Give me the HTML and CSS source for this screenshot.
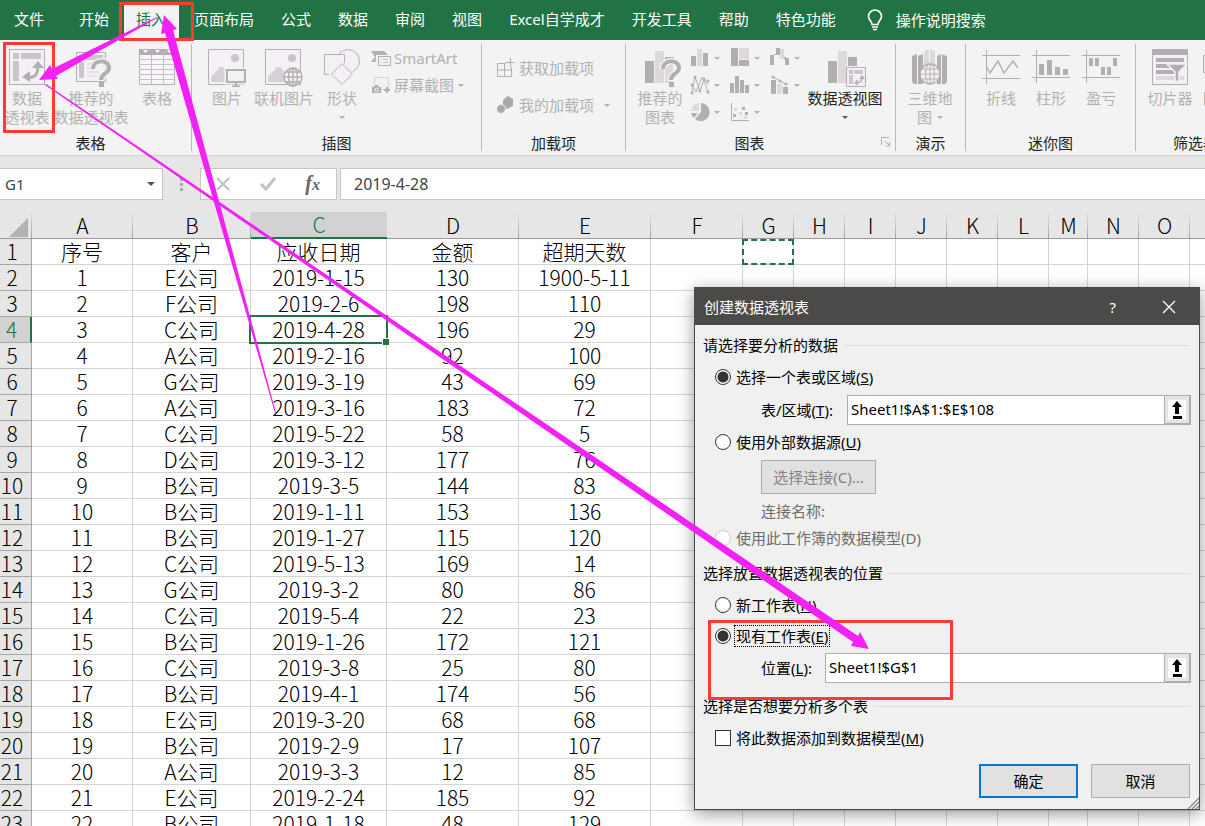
FILE: index.html
```html
<!DOCTYPE html>
<html lang="zh-CN">
<head>
<meta charset="utf-8">
<title>创建数据透视表</title>
<link rel="stylesheet" href="styles.css">
</head>
<body>
<div class="app">
  <nav class="menu">
    <button class="tab tab-file">文件</button>
    <button class="tab">开始</button>
    <button class="tab tab-active">插入</button>
    <button class="tab">页面布局</button>
    <button class="tab">公式</button>
    <button class="tab">数据</button>
    <button class="tab">审阅</button>
    <button class="tab">视图</button>
    <button class="tab">Excel自学成才</button>
    <button class="tab">开发工具</button>
    <button class="tab">帮助</button>
    <button class="tab">特色功能</button>
    <button class="tell">
      <svg width="16" height="22" viewBox="0 0 16 22" fill="none" stroke="#fff" stroke-width="1.6"><path d="M5 15.500C5 12 1.500 11 1.500 7.500a6.500 6.500 0 0 1 13 0C14.500 11 11 12 11 15.500zM5 18h6M6 20.500h4"/></svg>
      <span>操作说明搜索</span>
    </button>
  </nav>

  <div class="ribbon">
    <section class="group g-tables">
      <div class="tools">
        <button class="big w-54">
          <svg width="36" height="36" viewBox="0 0 36 36"><rect x=".5" y=".5" width="35" height="35" fill="#f5f0f6" stroke="#b1afb1"/><path fill="#c9c6c9" d="M4 4h6v6H4zM12 4h20v6H12zM4 12h6v20H4z"/><path d="M17 28c8 2 12-2 12-11" fill="none" stroke="#b1afb1" stroke-width="3"/><path fill="#b1afb1" d="M13 28l8-6v11zM23 19l6-7 6 7z"/></svg>
          <span>数据</span><span>透视表</span>
        </button>
        <button class="big w-74">
          <svg width="40" height="38" viewBox="-4 0 40 38"><path d="M1.500 3.500h29v29h-29z" fill="#f5f0f6" stroke="#b1afb1"/><path fill="#c9c6c9" d="M4 6h5v5H4zM11 6h17v5H11zM4 13h5v16H4z"/><path d="M12 15h8M12 19h8M12 23h12M12 27h10" stroke="#d5d0d6"/><path d="M18 20c0-10 16-10 16-1 0 6-8 5-8 13" fill="none" stroke="#f3f3f3" stroke-width="7"/><path d="M18 20c0-10 16-10 16-1 0 6-8 5-8 12" fill="none" stroke="#b1afb1" stroke-width="4"/><path fill="#b1afb1" d="M24 33h5v5h-5z"/></svg>
          <span>推荐的</span><span>数据透视表</span>
        </button>
        <button class="big w-58">
          <svg width="36" height="36" viewBox="0 0 36 36"><path d="M.5.5h35v35H.5z" fill="#f8f4f9" stroke="#b1afb1"/><path fill="#b1afb1" d="M0 0h36v6H0z"/><path fill="#fff" d="M4 1h5L6.500 4zM16 1h5l-2.500 3zM28 1h5l-2.500 3z"/><path d="M12.500 6v30M24.500 6v30M0 10.500h36M0 15.500h36M0 20.500h36M0 25.500h36M0 30.500h36" stroke="#c4c1c4"/></svg>
          <span>表格</span>
        </button>
      </div>
      <h2>表格</h2>
    </section>

    <section class="group g-art">
      <div class="tools">
        <button class="big w-56">
          <svg width="38" height="38" viewBox="0 0 38 38"><path d="M.5.5h35v35H.5z" fill="#f5f0f6" stroke="#b1afb1"/><circle cx="27" cy="9" r="4" fill="#c9c6c9"/><path fill="#d5d0d6" d="M3 33V28l9-10h3l7 8v7z"/><path d="M18.500 20.500h19v13h-19z" fill="#f5f0f6" stroke="#f3f3f3" stroke-width="4"/><path d="M19 21h18v12H19z" fill="#f5f0f6" stroke="#b1afb1" stroke-width="2"/><path d="M28 33v4M24 37.500h8" stroke="#b1afb1" stroke-width="2"/></svg>
          <span>图片</span>
        </button>
        <button class="big w-58">
          <svg width="38" height="38" viewBox="0 0 38 38"><path d="M.5.5h35v35H.5z" fill="#f5f0f6" stroke="#b1afb1"/><circle cx="27" cy="9" r="4" fill="#c9c6c9"/><path fill="#d5d0d6" d="M3 33V28l9-10h3l7 8v7z"/><circle cx="28" cy="28" r="9" fill="#f5f0f6" stroke="#b1afb1" stroke-width="1.400"/><ellipse cx="28" cy="28" rx="4.500" ry="9" fill="none" stroke="#b1afb1" stroke-width="1.400"/><path d="M19 28h18M28 19v18M21 23h14M21 33h14" stroke="#b1afb1" stroke-width="1.400"/></svg>
          <span>联机图片</span>
        </button>
        <button class="big w-58">
          <svg width="38" height="38" viewBox="0 0 38 38" fill="#f5f0f6" stroke="#b1afb1"><circle cx="25" cy="12" r="11.500"/><path d="M1.500 5.500h20v20h-20z"/><path d="M19 14.500L29.500 25 19 35.500 8.500 25z" stroke="#f3f3f3" stroke-width="4"/><path d="M19 14.500L29.500 25 19 35.500 8.500 25z"/></svg>
          <span>形状</span><span class="line"><i class="arrow"></i></span>
        </button>
        <div class="stack">
          <button class="small">
            <svg width="20" height="16" viewBox="0 0 20 16"><path fill="#b1afb1" d="M0 1h13l5 5H8l-4 4 3 2H0l4-5z"/><path d="M6.500 6.500h13v9h-13z" fill="#f5f0f6" stroke="#f3f3f3" stroke-width="3"/><path d="M7.500 6.500h12v9h-12z" fill="#f5f0f6" stroke="#b1afb1"/><path d="M10 9.500h1M12 9.500h5M10 12.500h1M12 12.500h5" stroke="#c4c1c4"/></svg>
            <span>SmartArt</span>
          </button>
          <button class="small">
            <svg width="20" height="18" viewBox="0 0 20 18"><path d="M3.500 1.500h14v12h-14z" fill="#f5f0f6" stroke="#b8b5b8" stroke-dasharray="1 1"/><path d="M0 9h10v9H0zM14 12h2v6h-2zM12 14h6v2h-6z" fill="#f3f3f3"/><path d="M1 11h2l1-2h3l1 2h2v6H1zM13 13h6v2h-6zM15 11h2v6h-2z" fill="#b1afb1"/><circle cx="5.500" cy="13.800" r="1.700" fill="none" stroke="#fff"/></svg>
            <span>屏幕截图</span><i class="arrow"></i>
          </button>
        </div>
      </div>
      <h2>插图</h2>
    </section>

    <section class="group g-addins">
      <div class="tools stack-wide">
        <button class="small">
          <svg width="20" height="20" viewBox="0 0 20 20" fill="none" stroke="#b1afb1"><path d="M1.500 5.500h14v13h-14zM8.500 5v14M1 12h15"/><path d="M10 4.500h9M14.500 0v9" stroke="#f3f3f3" stroke-width="3"/><path d="M10 4.500h9M14.500 0v9"/></svg>
          <span>获取加载项</span>
        </button>
        <button class="small">
          <svg width="20" height="20" viewBox="0 0 20 20" fill="#aaa8aa"><path d="M12 1l5 3v7l-6 3-4-2V5z"/><circle cx="5" cy="14" r="4.500" stroke="#f3f3f3"/></svg>
          <span>我的加载项</span><i class="arrow arrow-far"></i>
        </button>
      </div>
      <h2>加载项</h2>
    </section>

    <section class="group g-charts">
      <div class="tools">
        <button class="big w-60">
          <svg width="42" height="38" viewBox="-6 0 42 38"><path fill="#b1afb1" d="M0 12h9v22H0zM20 8h9v8h-9z"/><path fill="#ddd8dc" d="M10 2h9v32h-9zM20 16h8v18h-8z"/><path d="M18 20c0-10 16-10 16-1 0 6-8 5-8 13" fill="none" stroke="#f3f3f3" stroke-width="7"/><path d="M18 20c0-10 16-10 16-1 0 6-8 5-8 12" fill="none" stroke="#b1afb1" stroke-width="4"/><path fill="#b1afb1" d="M24 33h5v5h-5z"/></svg>
          <span>推荐的</span><span>图表</span>
        </button>
        <div class="charts">
          <button class="mini"><svg width="20" height="20" viewBox="0 0 20 20"><path fill="#b1afb1" d="M1 8h5v10H1zM13 5h5v13h-5z"/><path fill="#ddd8dc" d="M7 1h5v17H7z"/></svg><i class="arrow"></i></button>
          <button class="mini"><svg width="20" height="20" viewBox="0 0 20 20"><path fill="#b1afb1" d="M1 0h7v18H1zM9 12h10v6H9z"/><path fill="#ddd8dc" d="M9 0h10v11H9z"/></svg><i class="arrow"></i></button>
          <button class="mini"><svg width="20" height="20" viewBox="0 0 20 20"><path fill="#b1afb1" d="M0 7h4v10H0zM3 6h3V0h4v7H5zM15 10h4v7h-4zM10 9h6v2h-6z"/><path fill="#ddd8dc" d="M10 1h4v10h-4z"/></svg><i class="arrow"></i></button>
          <button class="mini"><svg width="20" height="20" viewBox="0 0 20 20"><path fill="none" stroke="#b1afb1" d="M2 18L5 2l5 14 4-12 4 14M2 10l4 7 6-15 6 7"/><path stroke="#b1afb1" stroke-linecap="round" stroke-width="3" d="M2 18h0M5 2h0M10 16h0M14 4h0M18 17h0M2 10h0M18 6h0"/></svg><i class="arrow"></i></button>
          <button class="mini"><svg width="20" height="20" viewBox="0 0 20 20"><path fill="#b1afb1" d="M0 8h4v10H0zM5 1h4v17H5zM10 5h4v13h-4zM15 10h4v8h-4z"/></svg><i class="arrow"></i></button>
          <button class="mini"><svg width="20" height="20" viewBox="0 0 20 20"><path fill="#b1afb1" d="M1 5h5v14H1zM13 12h5v7h-5z"/><path fill="#ddd8dc" d="M7 9h5v10H7z"/><path stroke="#b1afb1" fill="none" d="M3 2l7 4 6 3"/><path stroke="#b1afb1" stroke-linecap="round" stroke-width="3" d="M3 2h0M10 6h0M16 9h0"/></svg><i class="arrow"></i></button>
          <button class="mini"><svg width="20" height="20" viewBox="0 0 20 20"><path fill="#b1afb1" d="M11 1a9 9 0 1 1-6 16l6-7z"/><path fill="#ddd8dc" d="M9 1v8H1a9 9 0 0 1 8-8z"/><path fill="#b1afb1" d="M1 11h7l-4 5a9 9 0 0 1-3-5z"/></svg><i class="arrow"></i></button>
          <button class="mini"><svg width="20" height="20" viewBox="0 0 20 20"><path stroke="#b1afb1" fill="none" d="M1.500 1v17.500H19"/><path fill="#b1afb1" d="M12 5h3v3h-3zM3 12h3v3H3zM15 10h3v3h-3z"/><path fill="#ddd8dc" d="M4 6h3v3H4zM9 10h3v3H9zM14 14h3v3h-3z"/></svg><i class="arrow"></i></button>
        </div>
        <button class="big w-74 enabled">
          <svg width="44" height="38" viewBox="-4 0 44 38"><path fill="#b1afb1" d="M1 12h9v22H1zM21 8h9v9h-9z"/><path fill="#ddd8dc" d="M11 2h9v32h-9z"/><path d="M19.500 18.500h19v19h-19z" fill="#f5f0f6" stroke="#b1afb1"/><path fill="#c9c6c9" d="M22 21h4v4h-4zM27 21h9v4h-9zM22 26h4v9h-4z"/><path d="M29 34c4 0 6-2 6-5M31 31l-3 3 3 2M33 30l2-3 2 3" fill="none" stroke="#b1afb1" stroke-width="1.400"/></svg>
          <span>数据透视图</span><span class="line"><i class="arrow"></i></span>
        </button>
      </div>
      <div class="caption"><h2>图表</h2>
        <button class="launcher" aria-label="图表选项"><svg width="10" height="10" viewBox="0 0 10 10" fill="none" stroke="#b1afb1"><path d="M.5 8V.5H8M4 4l4 4M8.500 5v4H5"/></svg></button>
      </div>
    </section>

    <section class="group g-demo">
      <div class="tools">
        <button class="big w-60">
          <svg width="36" height="36" viewBox="0 0 36 36"><path fill="#b1afb1" d="M0 7l5-2v30H2l-2-2zM6 7l5-2v30H6zM25 7l4-2 6 2v26l-2 2h-8z"/><path fill="#ddd8dc" d="M12 2l5-2 6 2v30H12z"/><path stroke="#f3f3f3" d="M5.500 4v31M17.500 0v16M29.500 4v31"/><circle cx="18" cy="25" r="10" fill="#f5f0f6" stroke="#b1afb1" stroke-width="1.400"/><ellipse cx="18" cy="25" rx="4.500" ry="10" fill="none" stroke="#b1afb1"/><path d="M8 25h20M18 15v20M10 20h16M10 30h16" stroke="#b1afb1"/></svg>
          <span>三维地</span><span class="line">图<i class="arrow"></i></span>
        </button>
      </div>
      <h2>演示</h2>
    </section>

    <section class="group g-spark">
      <div class="tools">
        <button class="big w-50">
          <svg width="38" height="36" viewBox="0 0 38 36" fill="none" stroke="#b1afb1"><path d="M0 6.500h38M0 29.500h38M4.500 1v34"/><path d="M5 18l3 6 8-12 6 12 9-12 5 7" stroke-width="1.400"/></svg>
          <span>折线</span>
        </button>
        <button class="big w-50">
          <svg width="38" height="36" viewBox="0 0 38 36"><path d="M0 6.500h38M0 28.500h38M4.500 1v33" stroke="#b1afb1"/><path fill="#b1afb1" d="M7 15h5v11H7zM15 11h5v15h-5zM23 18h5v8h-5zM31 20h5v6h-5z"/></svg>
          <span>柱形</span>
        </button>
        <button class="big w-50">
          <svg width="38" height="36" viewBox="0 0 38 36"><path d="M0 6.500h38M0 28.500h38M4.500 1v33" stroke="#b1afb1"/><path fill="#b1afb1" d="M7 9h4v8H7zM13 9h4v8h-4zM31 9h4v8h-4zM19 18h4v8h-4zM25 18h4v8h-4z"/></svg>
          <span>盈亏</span>
        </button>
      </div>
      <h2>迷你图</h2>
    </section>

    <section class="group g-filter">
      <div class="tools">
        <button class="big w-58">
          <svg width="36" height="36" viewBox="0 0 36 36"><path d="M.5.5h35v35H.5z" fill="#f5f0f6" stroke="#b1afb1"/><path fill="#b1afb1" d="M0 0h36v6H0zM4 9h28v4H4zM4 15h14v4H4zM4 21h18v4H4z"/><path fill="#ddd8dc" d="M4 27h28v4H4z"/><path d="M15 15h20l-8 8v9l-4 1V23z" fill="#b1afb1" stroke="#f5f0f6" stroke-width="1.500"/></svg>
          <span>切片器</span>
        </button>
        <button class="big w-50">
          <svg width="42" height="36" viewBox="0 0 42 36"><path d="M.5 6.500h40v17H.5z" fill="#f5f0f6" stroke="#b1afb1"/></svg>
          <span>日程表</span>
        </button>
      </div>
      <h2>筛选器</h2>
    </section>
  </div>

  <div class="formula-bar">
    <div class="name-box"><input aria-label="名称框" value="G1"><i class="arrow"></i></div>
    <div class="grip"><i></i><i></i><i></i></div>
    <div class="fx-box">
      <button aria-label="取消输入"><svg width="16" height="16" viewBox="0 0 16 16" fill="none" stroke="#c0c0c0" stroke-width="2"><path d="M2 2l12 12M14 2L2 14"/></svg></button>
      <button aria-label="输入"><svg width="18" height="16" viewBox="0 0 18 16" fill="none" stroke="#c3c3c3" stroke-width="3"><path d="M2 8l5 5L16 2"/></svg></button>
      <button class="fx" aria-label="插入函数">f<span>x</span></button>
    </div>
    <input class="formula" aria-label="编辑栏" value="2019-4-28">
  </div>

  <main class="sheet">
    <table>
      <colgroup><col class="c-head"><col class="c-a"><col class="c-b"><col class="c-c"><col class="c-d"><col class="c-d"><col class="c-f"><col class="c-g"><col class="c-g"><col class="c-g"><col class="c-g"><col class="c-g"><col class="c-g"><col class="c-m"><col class="c-g"><col class="c-g"><col></colgroup>
      <thead><tr><th class="corner"><svg width="19" height="19" viewBox="0 0 19 19"><path fill="#b2b2b2" d="M19 0v19H0z"/></svg><th>A<th>B<th class="on">C<th>D<th>E<th>F<th>G<th>H<th>I<th>J<th>K<th>L<th>M<th>N<th>O<th></tr></thead>
      <tbody>
      <tr><th>1<td>序号<td>客户<td>应收日期<td>金额<td>超期天数<td><td class="marquee"><td><td><td><td><td><td><td><td><td>
      <tr><th>2<td>1<td>E公司<td>2019-1-15<td>130<td>1900-5-11<td><td><td><td><td><td><td><td><td><td><td>
      <tr><th>3<td>2<td>F公司<td>2019-2-6<td>198<td>110<td><td><td><td><td><td><td><td><td><td><td>
      <tr><th class="on">4<td>3<td>C公司<td class="selected">2019-4-28<td>196<td>29<td><td><td><td><td><td><td><td><td><td><td>
      <tr><th>5<td>4<td>A公司<td>2019-2-16<td>92<td>100<td><td><td><td><td><td><td><td><td><td><td>
      <tr><th>6<td>5<td>G公司<td>2019-3-19<td>43<td>69<td><td><td><td><td><td><td><td><td><td><td>
      <tr><th>7<td>6<td>A公司<td>2019-3-16<td>183<td>72<td><td><td><td><td><td><td><td><td><td><td>
      <tr><th>8<td>7<td>C公司<td>2019-5-22<td>58<td>5<td><td><td><td><td><td><td><td><td><td><td>
      <tr><th>9<td>8<td>D公司<td>2019-3-12<td>177<td>76<td><td><td><td><td><td><td><td><td><td><td>
      <tr><th>10<td>9<td>B公司<td>2019-3-5<td>144<td>83<td><td><td><td><td><td><td><td><td><td><td>
      <tr><th>11<td>10<td>B公司<td>2019-1-11<td>153<td>136<td><td><td><td><td><td><td><td><td><td><td>
      <tr><th>12<td>11<td>B公司<td>2019-1-27<td>115<td>120<td><td><td><td><td><td><td><td><td><td><td>
      <tr><th>13<td>12<td>C公司<td>2019-5-13<td>169<td>14<td><td><td><td><td><td><td><td><td><td><td>
      <tr><th>14<td>13<td>G公司<td>2019-3-2<td>80<td>86<td><td><td><td><td><td><td><td><td><td><td>
      <tr><th>15<td>14<td>C公司<td>2019-5-4<td>22<td>23<td><td><td><td><td><td><td><td><td><td><td>
      <tr><th>16<td>15<td>B公司<td>2019-1-26<td>172<td>121<td><td><td><td><td><td><td><td><td><td><td>
      <tr><th>17<td>16<td>C公司<td>2019-3-8<td>25<td>80<td><td><td><td><td><td><td><td><td><td><td>
      <tr><th>18<td>17<td>B公司<td>2019-4-1<td>174<td>56<td><td><td><td><td><td><td><td><td><td><td>
      <tr><th>19<td>18<td>E公司<td>2019-3-20<td>68<td>68<td><td><td><td><td><td><td><td><td><td><td>
      <tr><th>20<td>19<td>B公司<td>2019-2-9<td>17<td>107<td><td><td><td><td><td><td><td><td><td><td>
      <tr><th>21<td>20<td>A公司<td>2019-3-3<td>12<td>85<td><td><td><td><td><td><td><td><td><td><td>
      <tr><th>22<td>21<td>E公司<td>2019-2-24<td>185<td>92<td><td><td><td><td><td><td><td><td><td><td>
      <tr><th>23<td>22<td>B公司<td>2019-1-18<td>48<td>129<td><td><td><td><td><td><td><td><td><td><td>
      </tbody>
    </table>
  </main>
</div>

<form class="dialog" role="dialog" aria-labelledby="dlg-title">
  <header class="titlebar">
    <h1 id="dlg-title">创建数据透视表</h1>
    <button type="button" class="help" aria-label="帮助">?</button>
    <button type="button" class="close" aria-label="关闭"><svg width="14" height="14" viewBox="0 0 14 14" stroke="#fff" stroke-width="1.300"><path d="M1 1l12 12M13 1L1 13"/></svg></button>
  </header>
  <div class="dialog-body">
    <h3>请选择要分析的数据</h3>
    <label class="choice"><input type="radio" name="src" checked><span>选择一个表或区域(<u>S</u>)</span></label>
    <div class="field"><label for="range" class="label-range">表/区域(<u>T</u>):</label>
      <div class="ref-box"><input id="range" value="Sheet1!$A$1:$E$108"><button type="button" aria-label="折叠区域"><svg width="18" height="20" viewBox="0 0 18 20"><path fill="#fff" d="M0 0h18v20H0z"/><path d="M9 1l5 6h-3v7H7V7H4zM5 16h9v3H5z"/></svg></button></div>
    </div>
    <label class="choice"><input type="radio" name="src"><span>使用外部数据源(<u>U</u>)</span></label>
    <button type="button" class="btn connect" disabled>选择连接(C)...</button>
    <p class="conn-name">连接名称:</p>
    <label class="choice model"><input type="radio" name="src" disabled><span>使用此工作簿的数据模型(D)</span></label>
    <h3>选择放置数据透视表的位置</h3>
    <label class="choice"><input type="radio" name="dest"><span>新工作表(<u>N</u>)</span></label>
    <label class="choice focus"><input type="radio" name="dest" checked><span>现有工作表(<u>E</u>)</span></label>
    <div class="field"><label for="loc" class="label-loc">位置(<u>L</u>):</label>
      <div class="ref-box"><input id="loc" value="Sheet1!$G$1"><button type="button" aria-label="折叠位置"><svg width="18" height="20" viewBox="0 0 18 20"><path fill="#fff" d="M0 0h18v20H0z"/><path d="M9 1l5 6h-3v7H7V7H4zM5 16h9v3H5z"/></svg></button></div>
    </div>
    <h3>选择是否想要分析多个表</h3>
    <label class="choice"><input type="checkbox"><span>将此数据添加到数据模型(<u>M</u>)</span></label>
    <div class="actions"><button type="button" class="btn primary">确定</button><button type="button" class="btn">取消</button></div>
  </div>
  <svg class="resize" width="12" height="12" viewBox="0 0 12 12" stroke="#8a8a8a" stroke-width="1.400"><path d="M1 12L12 1M5 12l7-7M9 12l3-3"/></svg>
</form>

<svg class="marks" width="1205" height="826" viewBox="0 0 1205 826">
  <g fill="none" stroke="#fd3a35" stroke-width="3"><path d="M4.500 43.500h49v88h-49zM120.500 3.500h72v36h-72zM709.500 621.500h242v77h-242z"/></g>
  <g fill="#f321f5">
    <path d="M157 17L52 69l-2-4-11 15 19-1-2-3L157 18z"/>
    <path d="M276 413L173 30l4-1-13-14-3 19 4-1L275 413z"/>
    <path d="M46 84L858 636l2-4 9 17-18-3 2-4L45 85z"/>
  </g>
</svg>
</body>
</html>
```
FILE: styles.css
```css
* { box-sizing: border-box; }

body {
  margin: 0;
  height: 100vh;
  position: relative;
  overflow: hidden;
  font: 15px/20px "Noto Sans", "Noto Sans CJK SC", sans-serif;
  color: #111;
}

button, input { font: inherit; color: inherit; }
button { border: 0; background: none; padding: 0; }
h1, h2, h3, p { margin: 0; font-size: 15px; font-weight: normal; }
svg { display: block; flex: none; }

.app {
  height: 100%;
  display: flex;
  flex-direction: column;
  background: #e6e6e6;
}

/* Menu */
.menu {
  flex: none;
  display: flex;
  align-items: flex-end;
  gap: 3px;
  height: 40px;
  padding-left: 2px;
  background: #217346;
  color: #fff;
  white-space: nowrap;
}
.tab { height: 35px; padding: 0 12px 8px; }
.tab-file { margin-right: 8px; }
.tab-active { padding-right: 13px; background: #f3f3f3; color: #217346; }
.tell { display: flex; align-items: center; gap: 13px; height: 35px; padding: 0 16px 5px; }

/* Ribbon */
.ribbon {
  flex: none;
  display: flex;
  height: 116px;
  padding-top: 4px;
  overflow: hidden;
  background: #f3f3f3;
  border-bottom: 1px solid #d2d2d2;
  color: #b1b1b1;
  white-space: nowrap;
}
.group {
  flex: none;
  display: flex;
  flex-direction: column;
  height: 107px;
  border-right: 1px solid #b8b8b8;
}
.tools { flex: 1; display: flex; align-items: flex-start; padding-top: 5px; }
.group h2 { color: #222; text-align: center; height: 18px; }
.g-tables { width: 192px; }
.g-tables h2 { padding-right: 10px; }
.g-art { width: 290px; }
.g-art .tools { padding-left: 7px; }
.g-addins { width: 144px; }
.g-charts { width: 270px; }
.g-charts .tools { padding-left: 4px; }
.g-demo { width: 70px; }
.g-demo .tools { padding-left: 4px; }
.g-spark { width: 170px; }
.g-spark .tools { padding-left: 10px; }
.g-filter { width: 120px; }
.g-filter .tools { padding-left: 5px; }

.big { flex: none; display: flex; flex-direction: column; align-items: center; line-height: 19px; }
.big svg { margin-bottom: 2px; }
.big svg[height="36"] { margin-bottom: 4px; }
.enabled { color: #222; }
.w-50 { width: 50px; }
.w-54 { width: 54px; }
.w-56 { width: 56px; }
.w-58 { width: 58px; }
.w-60 { width: 60px; }
.w-74 { width: 74px; }
.line { display: flex; align-items: center; justify-content: center; gap: 5px; height: 19px; }

.arrow {
  flex: none;
  width: 0;
  height: 0;
  border: 3px solid transparent;
  border-top-color: #b1b1b1;
  border-bottom: 0;
}
.enabled .arrow, .name-box .arrow { border-top-color: #555; }
.name-box .arrow { border-width: 4px 4px 0; }

.stack { display: flex; flex-direction: column; gap: 9px; }
.stack .small { height: 18px; }
.stack-wide { flex-direction: column; gap: 17px; padding: 14px 0 0 14px; }
.small { display: flex; align-items: center; gap: 3px; height: 20px; }
.small .arrow { margin-left: 1px; }
.small .arrow-far { margin-left: 7px; }
.charts { display: grid; grid-template-columns: 40px 40px 38px; grid-auto-rows: 27px; }
.mini { display: flex; align-items: center; gap: 4px; height: 18px; }
.caption { display: flex; justify-content: flex-end; align-items: center; padding-right: 4px; }
.caption h2 { flex: 1; padding-right: 8px; }

/* Formula bar */
.formula-bar { flex: none; display: flex; height: 56px; padding: 12px 0; color: #444; }
.name-box, .fx-box, .formula { height: 32px; border: 1px solid #c6c6c6; background: #fff; }
.name-box { width: 163px; border-left: 0; display: flex; align-items: center; padding: 0 7px 0 5px; }
.name-box input { flex: 1; min-width: 0; border: 0; padding: 0; background: none; outline: 0; }
.grip { width: 37px; display: flex; flex-direction: column; align-items: center; justify-content: center; gap: 2px; }
.grip i { width: 3px; height: 3px; background: #aaa; }
.fx-box { width: 137px; display: flex; align-items: center; justify-content: space-between; padding: 0 16px 0 14px; }
.fx { font: italic bold 20px/24px "Liberation Serif", serif; color: #666; }
.fx span { font-size: 16px; }
.formula { flex: 1; min-width: 0; margin-left: 3px; padding: 0 13px; border-right: 0; outline: 0; font-size: 16px; }

/* Sheet */
.sheet { flex: 1; min-height: 0; overflow: hidden; }
.sheet table {
  width: 100%;
  table-layout: fixed;
  border-collapse: separate;
  border-spacing: 0;
  background: #fff;
  font: 21px/25px "Noto Sans CJK SC", sans-serif;
  font-weight: 300;
  color: #000;
}
.sheet th, .sheet td {
  height: 26px;
  padding: 0;
  border: 0 solid #d4d4d4;
  border-width: 0 1px 1px 0;
  text-align: center;
  font-weight: 300;
  white-space: nowrap;
}
.sheet th:last-child, .sheet td:last-child { border-right: 0; }
.sheet thead th {
  height: 27px;
  background: linear-gradient(#e6e6e6, #a0a0a0) right / 1px 100% no-repeat #e6e6e6;
  border-width: 0 0 1px;
  border-color: #9b9b9b;
  line-height: 25px;
}
.sheet thead th:last-child { background: #e6e6e6; }
.sheet tbody th { background: #e6e6e6; border-color: #a6a6a6; padding-right: 7px; }
.sheet thead .on { background: #d2d2d2; color: #217346; border-bottom: 2px solid #217346; }
.sheet tbody .on { background: #d2d2d2; color: #217346; border-right: 2px solid #217346; }
.corner svg { margin: 4px 0 0 9px; }
.c-head { width: 32px; }
.c-a { width: 101px; }
.c-b { width: 118px; }
.c-c { width: 136px; }
.c-d { width: 132px; }
.c-f { width: 92px; }
.c-g { width: 51px; }
.c-m { width: 39px; }

.selected, .marquee { position: relative; }
.selected::before {
  content: "";
  position: absolute;
  inset: -2px;
  border: 2px solid #217346;
}
.selected::after {
  content: "";
  position: absolute;
  right: -3px;
  bottom: -3px;
  width: 6px;
  height: 6px;
  background: #217346;
  border: solid #fff;
  border-width: 1px 0 0 1px;
}
.marquee::before {
  content: "";
  position: absolute;
  inset: 0 -1px -1px -1px;
  border: 2px dashed #217346;
}

/* Dialog */
.dialog {
  position: absolute;
  left: 694px;
  top: 287px;
  width: 506px;
  background: #f0f0f0;
  border: 1px solid #4d4b49;
  box-shadow: 0 4px 16px rgba(0, 0, 0, .4);
  color: #000;
}
.titlebar { display: flex; align-items: center; height: 37px; padding: 0 23px 0 9px; background: #4b4a48; color: #fff; }
.titlebar h1 { flex: 1; }
.close { margin-left: 46px; }
.dialog-body { padding: 8px 8px 11px; }
.dialog h3 { display: flex; align-items: center; gap: 5px; height: 24px; margin-top: 11px; }
.dialog h3:first-child { margin-top: 0; }
.dialog h3::after { content: ""; flex: 1; height: 1px; background: #dcdcdc; }
.choice { display: flex; align-items: center; gap: 5px; width: max-content; height: 24px; margin: 8px 0 6px 12px; }
.choice input { appearance: none; width: 16px; height: 16px; margin: 0; border: 1px solid #333; background: #fff; }
.choice input[type="radio"] { border-radius: 50%; }
.choice input[type="radio"]:checked { background: radial-gradient(circle, #333 5px, #fff 6px); }
.choice input:disabled { border-color: #ccc; }
.field + .choice { margin-top: 5px; }
.field { display: flex; align-items: center; height: 30px; padding-left: 58px; }
.label-range { width: 86px; }
.label-loc { width: 64px; }
.ref-box { flex: 1; min-width: 0; display: flex; height: 30px; border: 1px solid #abadb3; background: #fff; }
.ref-box input { flex: 1; min-width: 0; border: 0; padding: 0 3px 3px; background: none; outline: 0; }
.ref-box button { width: 26px; padding-left: 3px; background: #e4e4e4; border: 1px solid #abadb3; border-width: 0 1px 1px; }
.btn { width: 99px; height: 34px; background: #e1e1e1; border: 1px solid #adadad; }
.connect { display: block; width: 115px; margin-left: 58px; color: #838383; }
.conn-name { margin: 7px 0 0 58px; color: #6d6d6d; }
.model { margin-top: 5px; margin-bottom: 0; color: #6d6d6d; }
.focus { margin: 7px 0 5px 12px; gap: 4px; }
.focus span { padding: 0 1px; outline: 1px dotted #000; }
.actions { display: flex; justify-content: flex-end; gap: 13px; margin-top: 14px; padding-right: 1px; }
.primary { border: 2px solid #0078d7; }
.resize { position: absolute; right: 0; bottom: 0; }

/* Callouts drawn over the whole window */
.marks { position: absolute; left: 0; top: 0; pointer-events: none; }
```
